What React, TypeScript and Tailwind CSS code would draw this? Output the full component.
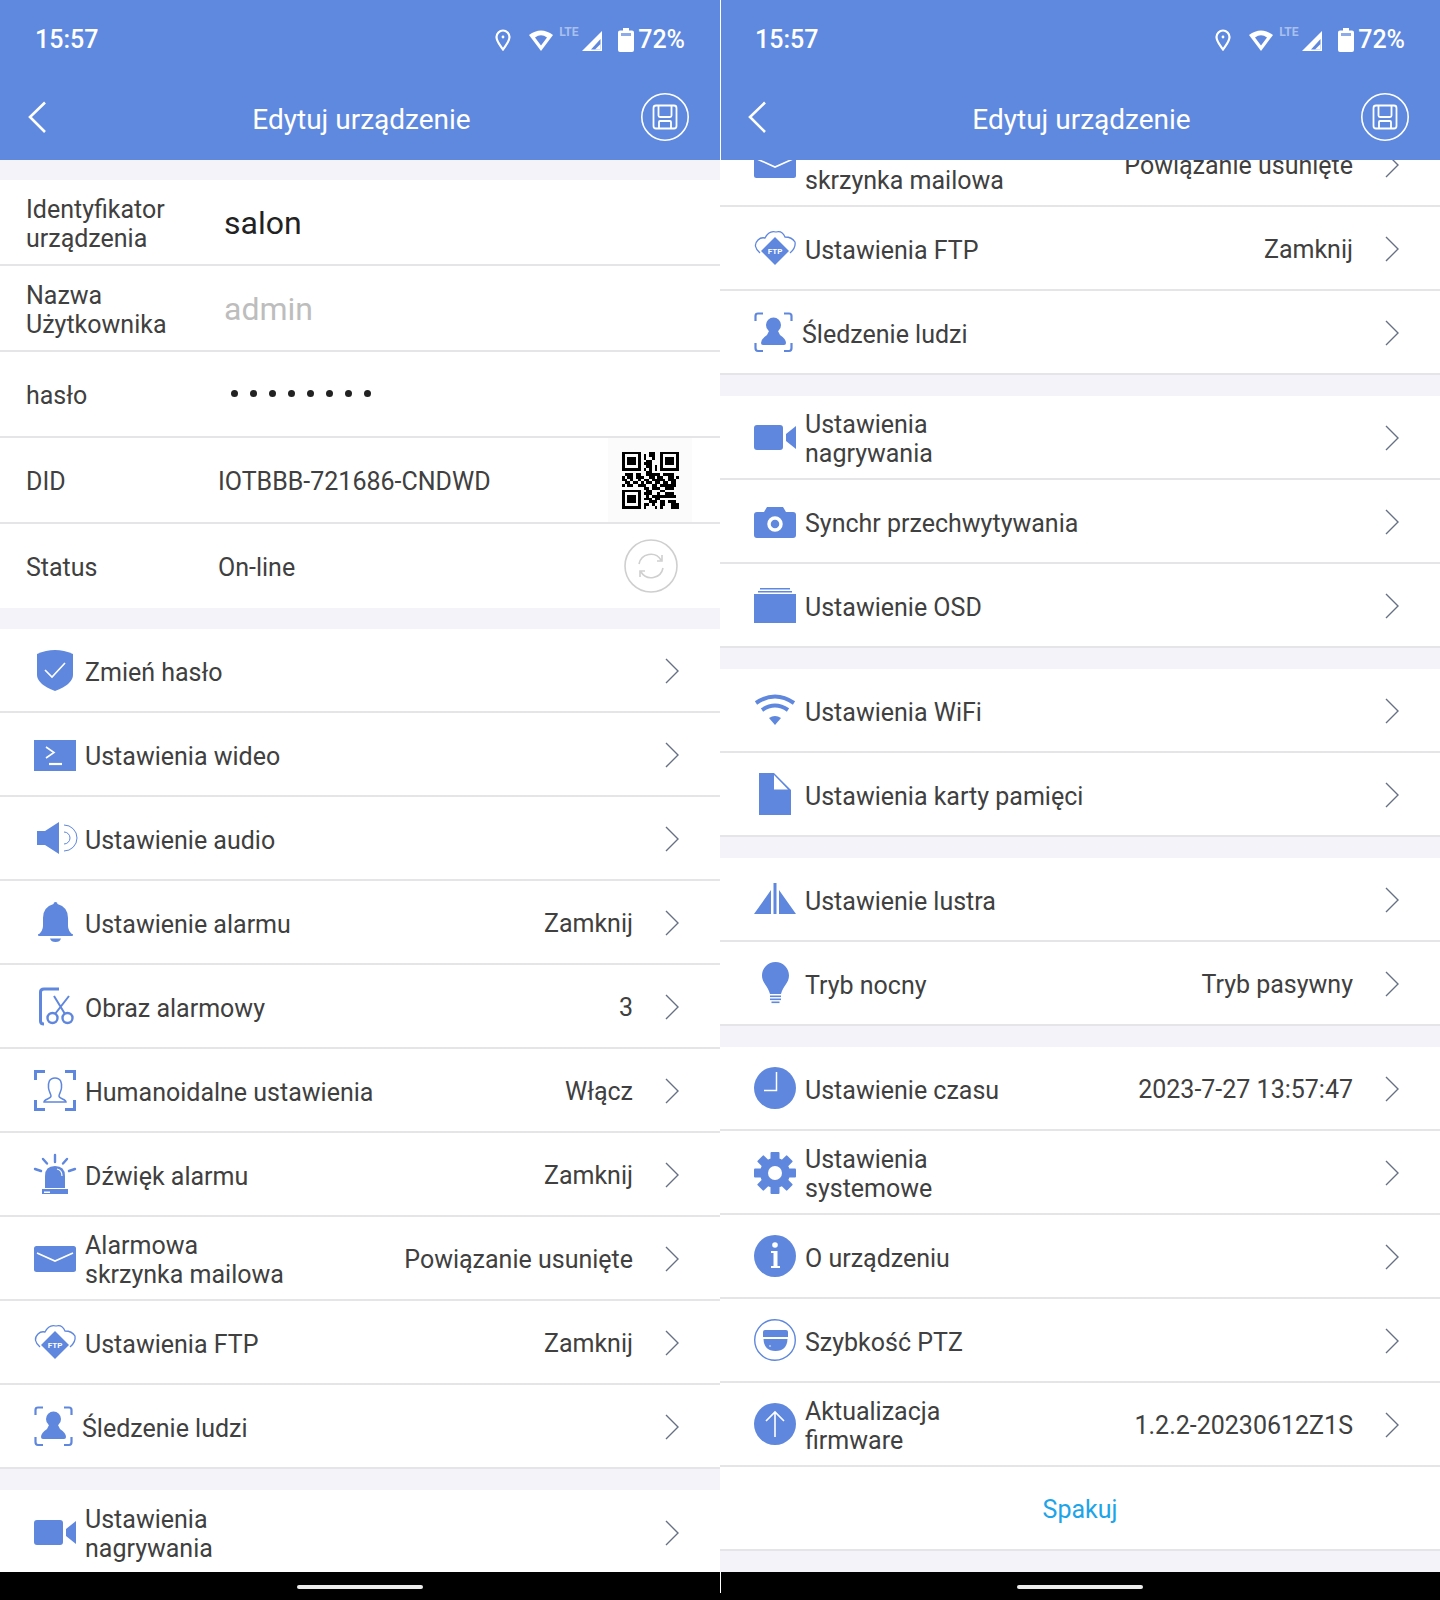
import type { ReactNode } from "react";

const blue = "#5f87dd";

function Svg({ children }: { children: ReactNode }) {
  return (
    <svg width="42" height="44" viewBox="0 0 42 44" fill={blue} className="shrink-0 overflow-visible">
      {children}
    </svg>
  );
}

const icons: Record<string, ReactNode> = {
  shield: (
    <Svg>
      <path d="M3 6 Q12 2 21 2 Q30 2 39 6 V27 Q39 36 21 43 Q3 36 3 27Z" />
      <path d="M11 22 L18 29 L31 15" fill="none" stroke="#fff" strokeWidth="1.6" />
    </Svg>
  ),
  video: (
    <Svg>
      <rect x="0" y="8" width="42" height="31" />
      <path d="M12 15 L20 20.5 L12 26" fill="none" stroke="#fff" strokeWidth="1.6" />
      <path d="M15 32 H28" stroke="#fff" strokeWidth="2.2" />
    </Svg>
  ),
  audio: (
    <Svg>
      <path d="M3 15 H11 L25 6 V38 L11 29 H3Z" />
      <path d="M30 9 A13 13 0 0 1 30 35 M30 16 A6 6 0 0 1 30 28" fill="none" stroke={blue} strokeWidth="1" />
    </Svg>
  ),
  bell: (
    <Svg>
      <path d="M19.5 4 A2 2 0 0 1 23.5 4 Q34 7 34 18 V26 Q34 31 39 35 H4 Q9 31 9 26 V18 Q9 7 19.5 4Z" />
      <rect x="4" y="34" width="35" height="2" rx="1" />
      <path d="M16 38.5 H27 Q26 42 21.5 42 Q17 42 16 38.5Z" />
    </Svg>
  ),
  cut: (
    <Svg>
      <path d="M25 5 H10 Q6.5 5 6.5 8 V37 Q6.5 40 10 40" fill="none" stroke={blue} strokeWidth="3" />
      <circle cx="18.5" cy="34" r="5" fill="none" stroke={blue} strokeWidth="2.4" />
      <circle cx="33.5" cy="34" r="5" fill="none" stroke={blue} strokeWidth="2.4" />
      <path d="M21 30 L35 12 M31 30 L20 12" fill="none" stroke={blue} strokeWidth="2" />
    </Svg>
  ),
  human: (
    <Svg>
      <path d="M1.5 12 V3.5 H11 M31 3.5 H40.5 V12 M1.5 32 V41.5 H11 M31 41.5 H40.5 V32" fill="none" stroke={blue} strokeWidth="3" />
      <path
        d="M21 10 C15 10 14 15 14.5 20 C15 24 17 26 17 28 C17 31 10 31 10 34 H32 C32 31 25 31 25 28 C25 26 27 24 27.5 20 C28 15 27 10 21 10Z"
        fill="none"
        stroke={blue}
        strokeWidth="1.5"
      />
    </Svg>
  ),
  siren: (
    <Svg>
      <path d="M11 36 V24 Q11 14 21 14 Q31 14 31 24 V36Z" />
      <path d="M23 17 Q28 18 28 24" fill="none" stroke="#fff" strokeWidth="1.2" />
      <rect x="8" y="37" width="26" height="5" />
      <rect x="10" y="39.5" width="6" height="1.5" fill="#fff" />
      <path d="M21 3 V10 M9 7 L13 11.5 M33 7 L29 11.5 M1 17 L7 19 M41 17 L35 19" fill="none" stroke={blue} strokeWidth="2.4" strokeLinecap="round" />
    </Svg>
  ),
  mail: (
    <Svg>
      <rect x="0" y="10" width="42" height="26" rx="2.5" />
      <path d="M3 17 L21 25 L39 17" fill="none" stroke="#fff" strokeWidth="1.6" />
    </Svg>
  ),
  ftp: (
    <Svg>
      <path d="M6 27 Q-2 20 4 14 Q7 11 11 12 Q15 4 22 6 Q28 4 31 11 Q38 11 41 16 Q42 22 36 27" fill="none" stroke={blue} strokeWidth="1.3" />
      <path d="M21 11 L35 25 L21 39 L7 25Z" />
      <text x="21" y="28" textAnchor="middle" fontSize="8" fontWeight="700" fill="#fff" fontFamily="Roboto, sans-serif">
        FTP
      </text>
    </Svg>
  ),
  person: (
    <Svg>
      <path d="M1.5 11 V6 Q1.5 3.5 4 3.5 H9 M30 3.5 H35 Q37.5 3.5 37.5 6 V11 M1.5 33 V38 Q1.5 41 4 41 H9 M30 41 H35 Q37.5 41 37.5 38 V33" fill="none" stroke={blue} strokeWidth="2.2" />
      <circle cx="19.5" cy="15" r="7.5" />
      <path d="M15 21 H24 L26 25 Q32 29 32 33 Q32 35 30 35 H9 Q7 35 7 33 Q7 29 13 25Z" />
    </Svg>
  ),
  camcorder: (
    <Svg>
      <rect x="0" y="10" width="29" height="25" rx="3" />
      <path d="M42 11 L32 19 V26 L42 34Z" />
    </Svg>
  ),
  camera: (
    <Svg>
      <path d="M3 13 H10 L13 8 H29 L32 13 H39 Q42 13 42 16 V36 Q42 39 39 39 H3 Q0 39 0 36 V16 Q0 13 3 13Z" />
      <circle cx="21" cy="25" r="6" fill="none" stroke="#fff" strokeWidth="3.5" />
    </Svg>
  ),
  osd: (
    <Svg>
      <rect x="0" y="11" width="42" height="29" />
      <rect x="4" y="8" width="34" height="1.5" />
      <rect x="6" y="5" width="30" height="1.5" />
    </Svg>
  ),
  wifi: (
    <Svg>
      <path d="M2 15 Q21 2 40 15 M8 22 Q21 13 34 22" fill="none" stroke={blue} strokeWidth="4" />
      <path d="M15 30 Q21 26 27 30 L21 37Z" />
    </Svg>
  ),
  file: (
    <Svg>
      <path d="M5 1 H20 L37 18 V43 H5Z" />
      <path d="M20 3 L34 17.5 H20Z" fill="#fff" />
    </Svg>
  ),
  mirror: (
    <Svg>
      <path d="M0 37 L17 13 V37Z M42 37 L25 13 V37Z" />
      <rect x="19.5" y="6" width="3" height="31" />
    </Svg>
  ),
  bulb: (
    <Svg>
      <path d="M21.5 1 C29 1 35 7 35 14.5 C35 22 29 25 27 33 H16 C14 25 8 22 8 14.5 C8 7 14 1 21.5 1Z" />
      <rect x="16" y="34.5" width="11" height="1.6" />
      <rect x="16" y="37.5" width="11" height="1.6" />
      <rect x="17.5" y="40.5" width="8" height="1.6" />
    </Svg>
  ),
  clock: (
    <Svg>
      <circle cx="21" cy="22" r="21" />
      <path d="M22.5 6 V24.5 H10" fill="none" stroke="#fff" strokeWidth="1.5" />
    </Svg>
  ),
  gear: (
    <Svg>
      <circle cx="21" cy="23" r="15" />
      {[0, 45, 90, 135, 180, 225, 270, 315].map((a) => (
        <rect key={a} x="16.5" y="2" width="9" height="10" rx="1" transform={`rotate(${a} 21 23)`} />
      ))}
      <circle cx="21" cy="23" r="7" fill="#fff" />
    </Svg>
  ),
  info: (
    <Svg>
      <circle cx="21" cy="22" r="21" />
      <circle cx="21" cy="11" r="2.8" fill="#fff" />
      <path d="M17 17 H23.5 V32 H26 V34 H17 V32 H19.5 V19 H17Z" fill="#fff" />
    </Svg>
  ),
  ptz: (
    <Svg>
      <circle cx="21" cy="22" r="20.3" fill="none" stroke={blue} strokeWidth="1.4" />
      <path d="M9 14 Q9 12 11 12 H32 Q34 12 34 14 V19 H9Z" />
      <path d="M9.5 21 H33.5 Q33 33 21.5 33 Q10 33 9.5 21Z" />
      <circle cx="16" cy="28" r="0.8" fill="#fff" />
    </Svg>
  ),
  upload: (
    <Svg>
      <circle cx="21" cy="22" r="21" />
      <path d="M21 35 V10 M12 19 L21 10 L30 19" fill="none" stroke="#fff" strokeWidth="1.6" />
    </Svg>
  ),
};

function Chevron() {
  return (
    <svg width="14" height="26" viewBox="0 0 14 26" fill="none" stroke="#667085" strokeWidth="1.4" className="mt-[2px] shrink-0">
      <path d="M1 1 L13 13 L1 25" />
    </svg>
  );
}

type Item = { icon: string; label: string[]; value?: string; tight?: boolean };

function MenuRow({ item, last }: { item: Item; last?: boolean }) {
  return (
    <div className={`flex h-[84px] shrink-0 items-center bg-white border-[#e5e5e7] pl-[34px] pr-[41px] ${last ? "" : "border-b-2"}`}>
      {icons[item.icon]}
      <div className={`pt-[4px] leading-[29px] ${item.tight ? "ml-[6px]" : "ml-[9px]"}`}>
        {item.label.map((l) => (
          <div key={l}>{l}</div>
        ))}
      </div>
      <div className="flex-1 pt-[4px] pr-[32px] text-right">{item.value}</div>
      <Chevron />
    </div>
  );
}

function Gap() {
  return <div className="h-[21px] shrink-0 bg-[#f4f3f9]" />;
}

function Group({ items }: { items: Item[] }) {
  return (
    <>
      {items.map((it) => (
        <MenuRow key={it.icon} item={it} />
      ))}
    </>
  );
}

function StatusBar() {
  return (
    <div className="flex h-[78px] items-center pl-[35px] pr-[35px] pt-[1px] text-[25px] font-medium text-white">
      <span>15:57</span>
      <div className="ml-auto flex items-center">
        <svg width="18" height="22" viewBox="0 0 18 22" fill="none" stroke="#fff" strokeWidth="2.2">
          <path d="M9 20.5 C6 16 2.5 12.5 2.5 8 A6.5 6.5 0 0 1 15.5 8 C15.5 12.5 12 16 9 20.5Z" />
          <circle cx="9" cy="8" r="1.4" fill="#fff" stroke="none" />
        </svg>
        <svg width="26" height="22" viewBox="0 0 26 22" className="ml-[16px]">
          <path d="M1 6 Q13 -3 25 6 L13 22Z" fill="#fff" />
          <path d="M7 8.5 Q13 4 19 8.5 L13 16.5Z" fill="#5f87dd" />
        </svg>
        <div className="relative w-[24px]">
          <span className="absolute -top-[14px] left-[5px] text-[12px] leading-[12px] font-bold text-[#a9c0ee]">LTE</span>
        </div>
        <svg width="22" height="22" viewBox="0 0 22 22" className="ml-[3px] mt-[3px]" fill="none">
          <path d="M1 21 L21 1 V21Z" fill="#fff" />
          <path d="M10 19.5 H19.5 V9 Z" fill="#5f87dd" />
          <path d="M14 19.5 H19.5 V14Z" fill="#fff" />
        </svg>
        <svg width="16" height="24" viewBox="0 0 16 24" className="ml-[15px]">
          <path d="M5 0 H11 V2.5 H14 Q16 2.5 16 4.5 V22 Q16 24 14 24 H2 Q0 24 0 22 V4.5 Q0 2.5 2 2.5 H5Z" fill="#fff" />
          <rect x="3" y="5" width="10" height="3" fill="#5f87dd" opacity="0.7" />
        </svg>
        <span className="ml-[4px]">72%</span>
      </div>
    </div>
  );
}

function Header() {
  return (
    <div className="z-10 h-[160px] shrink-0 bg-[#5f89de]">
      <StatusBar />
      <div className="flex h-[82px] items-center px-[32px] text-white">
        <div className="w-[48px]">
          <svg width="20" height="32" viewBox="0 0 20 32" fill="none" stroke="#fff" strokeWidth="2.6" className="-ml-[5px] -mt-[4px]">
            <path d="M18 1.5 L3 16 L18 31" />
          </svg>
        </div>
        <div className="flex-1 pt-[2px] pl-[2px] text-center text-[28px]">Edytuj urządzenie</div>
        <svg width="48" height="48" viewBox="0 0 48 48" fill="none" stroke="#fff" className="-mr-[1px] -mt-[4px]">
          <circle cx="24" cy="24" r="23.2" strokeWidth="1.6" />
          <path
            d="M15 12.5 H33 Q35.5 12.5 35.5 15 V33 Q35.5 35.5 33 35.5 H15 Q12.5 35.5 12.5 33 V15 Q12.5 12.5 15 12.5Z M17.5 13 V22.5 Q17.5 24 19 24 H29 Q30.5 24 30.5 22.5 V13 M18 35 V29 Q18 28 19 28 H29 Q30 28 30 29 V35"
            strokeWidth="1.8"
          />
        </svg>
      </div>
    </div>
  );
}

function NavBar() {
  return (
    <div className="z-10 flex h-[28px] shrink-0 justify-center bg-black pt-[13px]">
      <div className="h-[4px] w-[126px] rounded-full bg-[#ececec]" />
    </div>
  );
}

function FieldRow({ label, children, end }: { label: string[]; children: ReactNode; end?: ReactNode }) {
  return (
    <div className="flex h-[86px] items-center border-b-2 border-[#e5e5e7] bg-white pl-[26px] pt-[4px]">
      <div className="w-[192px] -mt-[1px] leading-[29px]">
        {label.map((l) => (
          <div key={l}>{l}</div>
        ))}
      </div>
      {children}
      {end}
    </div>
  );
}

const qrRows = [
  "111111100011001111111",
  "100000101011001000001",
  "101110101001001011101",
  "101110100110001011101",
  "101110101110001011101",
  "100000100110101000001",
  "111111101010101111111",
  "000000000110000000000",
  "011101100111110111100",
  "101101110011011001101",
  "110100101101111101110",
  "011011010110110110110",
  "101100111001101111110",
  "000000001101110011100",
  "111111100110001100000",
  "100000101110010011100",
  "101110100101111111110",
  "101110101110110000000",
  "101110100011101101110",
  "100000101101001100111",
  "111111101000101000111",
];

function QrCode() {
  return (
    <div className="flex h-[84px] w-[84px] items-center justify-center bg-[#fbfbfb]">
      <svg width="57" height="58" viewBox="0 0 21 21" shapeRendering="crispEdges">
        {qrRows.map((row, y) =>
          row.split("").map((c, x) => (c === "1" ? <rect key={`${x}-${y}`} x={x} y={y} width="1" height="1" fill="#000" /> : null))
        )}
      </svg>
    </div>
  );
}

const leftA: Item[] = [
  { icon: "shield", label: ["Zmień hasło"] },
  { icon: "video", label: ["Ustawienia wideo"] },
  { icon: "audio", label: ["Ustawienie audio"] },
  { icon: "bell", label: ["Ustawienie alarmu"], value: "Zamknij" },
  { icon: "cut", label: ["Obraz alarmowy"], value: "3" },
  { icon: "human", label: ["Humanoidalne ustawienia"], value: "Włącz" },
  { icon: "siren", label: ["Dźwięk alarmu"], value: "Zamknij" },
  { icon: "mail", label: ["Alarmowa", "skrzynka mailowa"], value: "Powiązanie usunięte" },
  { icon: "ftp", label: ["Ustawienia FTP"], value: "Zamknij" },
  { icon: "person", label: ["Śledzenie ludzi"], tight: true },
];

const recording: Item = { icon: "camcorder", label: ["Ustawienia", "nagrywania"] };

const rightGroups: Item[][] = [
  [recording, { icon: "camera", label: ["Synchr przechwytywania"] }, { icon: "osd", label: ["Ustawienie OSD"] }],
  [
    { icon: "wifi", label: ["Ustawienia WiFi"] },
    { icon: "file", label: ["Ustawienia karty pamięci"] },
  ],
  [
    { icon: "mirror", label: ["Ustawienie lustra"] },
    { icon: "bulb", label: ["Tryb nocny"], value: "Tryb pasywny" },
  ],
  [
    { icon: "clock", label: ["Ustawienie czasu"], value: "2023-7-27 13:57:47" },
    { icon: "gear", label: ["Ustawienia", "systemowe"] },
    { icon: "info", label: ["O urządzeniu"] },
    { icon: "ptz", label: ["Szybkość PTZ"] },
    { icon: "upload", label: ["Aktualizacja", "firmware"], value: "1.2.2-20230612Z1S" },
  ],
];

export default function App() {
  return (
    <div className="flex h-[1600px] w-[1440px] overflow-hidden bg-white font-['Roboto',sans-serif] text-[25px] text-[#404040]">
      {/* Left phone */}
      <div className="flex h-full w-[720px] flex-col">
        <Header />
        <div className="flex-1 overflow-hidden bg-[#f4f3f9]">
          <div className="h-[20px]" />
          <FieldRow label={["Identyfikator", "urządzenia"]}>
            <span className="ml-[6px] -mt-[2px] text-[32px] text-[#222]">salon</span>
          </FieldRow>
          <FieldRow label={["Nazwa", "Użytkownika"]}>
            <span className="ml-[6px] -mt-[2px] text-[32px] text-[#bdbdbd]">admin</span>
          </FieldRow>
          <FieldRow label={["hasło"]}>
            <span className="ml-[13px] -mt-[6px] flex gap-[12px]">
              {[0, 1, 2, 3, 4, 5, 6, 7].map((i) => (
                <span key={i} className="h-[7px] w-[7px] rounded-full bg-[#222]" />
              ))}
            </span>
          </FieldRow>
          <FieldRow
            label={["DID"]}
            end={
              <div className="ml-auto mr-[28px] -mt-[4px]">
                <QrCode />
              </div>
            }
          >
            <span>IOTBBB-721686-CNDWD</span>
          </FieldRow>
          <div className="flex h-[84px] items-center bg-white pl-[26px] pt-[4px]">
            <div className="w-[192px]">Status</div>
            <span>On-line</span>
            <svg width="54" height="54" viewBox="0 0 54 54" fill="none" stroke="#cfcfcf" strokeWidth="1.6" className="ml-auto mr-[42px] -mt-[4px]">
              <circle cx="27" cy="27" r="26" />
              <path d="M15 25 A12 12 0 0 1 37 21 M39 29 A12 12 0 0 1 17 33 M33 22 L38 22 L38 16 M21 32 L16 32 L16 38" />
            </svg>
          </div>
          <Gap />
          <Group items={leftA} />
          <Gap />
          <MenuRow item={recording} last />
        </div>
        <NavBar />
      </div>
      {/* Right phone, scrolled further down */}
      <div className="relative flex h-full w-[720px] flex-col">
        <Header />
        <div className="flex-1 overflow-hidden bg-[#f4f3f9]">
          <div className="-mt-[37px]">
            <MenuRow item={leftA[7]} />
            <MenuRow item={leftA[8]} />
            <MenuRow item={leftA[9]} />
            {rightGroups.map((group, i) => (
              <div key={i}>
                <Gap />
                <Group items={group} />
              </div>
            ))}
            <div className="flex h-[84px] items-center justify-center border-b-2 border-[#e5e5e7] bg-white pt-[4px] text-[#1ea4e9]">Spakuj</div>
          </div>
        </div>
        <NavBar />
        {/* thin seam between the two screenshots */}
        <div className="absolute left-0 top-0 z-20 h-[160px] w-[1px] bg-white" />
        <div className="absolute left-0 top-[1572px] z-20 h-[21px] w-[1px] bg-white" />
      </div>
    </div>
  );
}
